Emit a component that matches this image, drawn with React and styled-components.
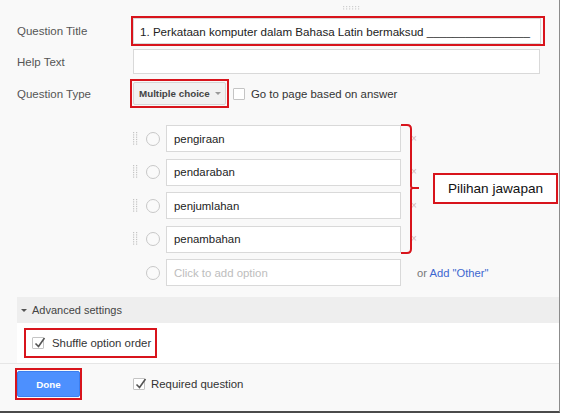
import React from "react";
import styled, { createGlobalStyle } from "styled-components";

const GlobalStyle = createGlobalStyle`
  html, body { margin: 0; padding: 0; background: #ffffff; }
  body { font-family: "Liberation Sans", Arial, sans-serif; }
  * { box-sizing: border-box; }
`;

const RED = "#d8141c";

const Page = styled.div`
  position: relative;
  width: 562px;
  height: 413px;
  overflow: hidden;
  background: #ffffff;
`;

const Panel = styled.div`
  position: relative;
  width: 560px;
  height: 413px;
  background: #f9f9f9;
  border-right: 1px solid #8c8c8c;
  border-bottom: 2px solid #4a4a4a;
  display: flex;
  flex-direction: column;
`;

const HandleBar = styled.div`
  height: 16px;
  display: flex;
  align-items: center;
  padding-left: 343px;
`;

const Row = styled.div`
  display: flex;
  align-items: center;
  padding-left: 17px;
  height: ${(p) => p.$h}px;
  margin-top: ${(p) => p.$mt || 0}px;
`;

const Label = styled.div`
  width: 116px;
  flex: none;
  font-size: 11.5px;
  color: #555;
`;

const RedBox = styled.div`
  border: 2px solid ${RED};
  display: flex;
  align-items: center;
  flex: none;
  margin-left: ${(p) => p.$ml || 0}px;
  padding: ${(p) => p.$pad || "0"};
`;

const TextInput = styled.div`
  width: ${(p) => p.$w}px;
  height: ${(p) => p.$h}px;
  background: #fff;
  border: 1px solid #d9d9d9;
  display: flex;
  align-items: center;
  padding-left: ${(p) => p.$pl || 6}px;
  font-size: ${(p) => p.$fs || 11.4}px;
  color: ${(p) => (p.$placeholder ? "#bdbdbd" : "#222")};
  white-space: nowrap;
  overflow: hidden;
`;

const SelectButton = styled.div`
  width: 93px;
  height: 23px;
  background: #f1f1f1;
  border: 1px solid #d6d6d6;
  border-radius: 2px;
  display: flex;
  align-items: center;
  padding-left: 5px;
  gap: 5px;
  font-size: 9.8px;
  font-weight: bold;
  color: #444;
`;

const Caret = styled.span`
  width: 0;
  height: 0;
  border-left: 3px solid transparent;
  border-right: 3px solid transparent;
  border-top: 3px solid ${(p) => p.$color || "#999"};
  display: inline-block;
`;

const Box = styled.span`
  width: 12px;
  height: 12px;
  flex: none;
  background: #fff;
  border: 1px solid #c4c4c4;
  border-radius: 1px;
  position: relative;
  margin-left: ${(p) => p.$ml || 0}px;
`;

const CheckMark = styled.svg`
  position: absolute;
  left: 1px;
  top: -2px;
`;

const InlineText = styled.span`
  font-size: 11.4px;
  color: #333;
  margin-left: ${(p) => p.$ml || 0}px;
  white-space: nowrap;
`;

const OptionList = styled.div`
  margin-top: 17px;
  padding-left: 133px;
  display: flex;
  flex-direction: column;
  gap: 6.5px;
  position: relative;
`;

const OptionRow = styled.div`
  height: 27px;
  display: flex;
  align-items: center;
`;

const HandleSlot = styled.div`
  width: 13px;
  flex: none;
  display: flex;
  align-items: center;
`;

const Radio = styled.span`
  width: 14px;
  height: 14px;
  border-radius: 50%;
  border: 1px solid #c8c8c8;
  background: #fafafa;
  flex: none;
  margin-right: 6px;
`;

const Remove = styled.span`
  margin-left: 10px;
  font-size: 10px;
  color: #d3b8b8;
  line-height: 1;
`;

const OtherText = styled.span`
  margin-left: 16px;
  font-size: 11.2px;
  color: #777;
  white-space: nowrap;
`;

const Link = styled.span`
  color: #3d67d0;
`;

const Bracket = styled.svg`
  position: absolute;
  left: 398px;
  top: -2px;
`;

const Callout = styled.div`
  position: absolute;
  left: 433px;
  top: 173px;
  width: 125px;
  height: 31px;
  border: 2px solid ${RED};
  background: #fff;
  display: flex;
  align-items: center;
  justify-content: center;
  font-size: 13.6px;
  color: #111;
`;

const AdvancedBar = styled.div`
  margin-top: 11px;
  margin-left: 17px;
  height: 26px;
  background: #eeeeee;
  display: flex;
  align-items: center;
  padding-left: 4px;
  gap: 5px;
  font-size: 11px;
  color: #444;
`;

const AdvancedBody = styled.div`
  margin-left: 17px;
  height: 40px;
  background: #ffffff;
  display: flex;
  align-items: center;
  padding-left: 7px;
`;

const CheckRedBox = styled.div`
  border: 2px solid ${RED};
  height: 30px;
  width: 133px;
  display: flex;
  align-items: center;
  padding-left: 6px;
`;

const Footer = styled.div`
  flex: 1;
  border-top: 1px solid #e6e6e6;
  display: flex;
  align-items: flex-start;
  padding: 4px 0 0 15px;
`;

const FooterInner = styled.div`
  display: flex;
  align-items: center;
`;

const DoneButton = styled.div`
  width: 63px;
  height: 26px;
  background: #4d90fe;
  border: 1px solid #3b7ff0;
  border-radius: 2px;
  display: flex;
  align-items: center;
  justify-content: center;
  font-size: 9.8px;
  font-weight: bold;
  color: #fff;
`;

const Dots = ({ cols, rows, color }) => (
  <svg width={cols * 3} height={rows * 2.3} viewBox={`0 0 ${cols * 3} ${rows * 2.3}`}>
    {Array.from({ length: rows }).map((_, r) =>
      Array.from({ length: cols }).map((_, c) => (
        <rect key={`${r}-${c}`} x={c * 3} y={r * 2.3} width="1.2" height="1.2" fill={color} />
      ))
    )}
  </svg>
);

const Check = ({ ml }) => (
  <Box $ml={ml}>
    <CheckMark width="12" height="13" viewBox="0 0 12 13">
      <path d="M1.5 7.5 L4.5 10.5 L10.5 2" fill="none" stroke="#555" strokeWidth="1.6" />
    </CheckMark>
  </Box>
);

const options = ["pengiraan", "pendaraban", "penjumlahan", "penambahan"];

export default function App() {
  return (
    <>
      <GlobalStyle />
      <Page>
        <Panel>
          <HandleBar>
            <Dots cols={6} rows={2} color="#cfcfcf" />
          </HandleBar>

          <Row $h={30}>
            <Label>Question Title</Label>
            <RedBox $ml={-2} $pad="0 2px 0 0">
              <TextInput $w={408} $h={26} $pl={6} $fs={11.6}>
                1. Perkataan komputer dalam Bahasa Latin bermaksud ________________
              </TextInput>
            </RedBox>
          </Row>

          <Row $h={25} $mt={3}>
            <Label>Help Text</Label>
            <TextInput $w={407} $h={25} />
          </Row>

          <Row $h={29} $mt={5}>
            <Label>Question Type</Label>
            <RedBox $ml={-3} $pad="1px">
              <SelectButton>
                Multiple choice <Caret />
              </SelectButton>
            </RedBox>
            <Box $ml={4} />
            <InlineText $ml={6}>Go to page based on answer</InlineText>
          </Row>

          <OptionList>
            {options.map((o) => (
              <OptionRow key={o}>
                <HandleSlot>
                  <Dots cols={2} rows={6} color="#c4c4c4" />
                </HandleSlot>
                <Radio />
                <TextInput $w={235} $h={27} $pl={7}>
                  {o}
                </TextInput>
                <Remove>×</Remove>
              </OptionRow>
            ))}
            <OptionRow>
              <HandleSlot />
              <Radio />
              <TextInput $w={235} $h={27} $pl={7} $placeholder>
                Click to add option
              </TextInput>
              <OtherText>
                or <Link>Add "Other"</Link>
              </OtherText>
            </OptionRow>
            <Bracket width="24" height="132" viewBox="0 0 24 132">
              <path
                d="M3 2 H9 Q13 2 13 6 V63 Q13 65 15 65 H21 M15 65 Q13 65 13 67 V126 Q13 130 9 130 H3"
                fill="none"
                stroke={RED}
                strokeWidth="2"
              />
            </Bracket>
          </OptionList>

          <AdvancedBar>
            <Caret $color="#555" />
            Advanced settings
          </AdvancedBar>
          <AdvancedBody>
            <CheckRedBox>
              <Check />
              <InlineText $ml={8}>Shuffle option order</InlineText>
            </CheckRedBox>
          </AdvancedBody>

          <Footer>
            <FooterInner>
              <RedBox $pad="1px 0">
                <DoneButton>Done</DoneButton>
              </RedBox>
              <Check ml={51} />
              <InlineText $ml={6}>Required question</InlineText>
            </FooterInner>
          </Footer>

          <Callout>Pilihan jawapan</Callout>
        </Panel>
      </Page>
    </>
  );
}
